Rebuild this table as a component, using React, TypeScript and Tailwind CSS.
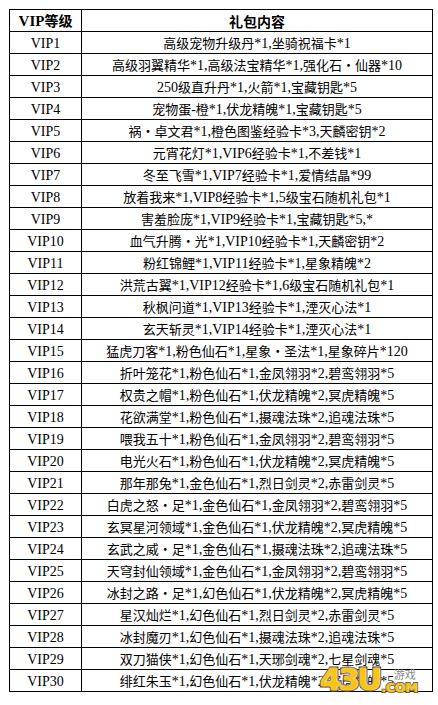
import React from "react";

const rows: string[] = [
  "高级宠物升级丹*1,坐骑祝福卡*1",
  "高级羽翼精华*1,高级法宝精华*1,强化石・仙器*10",
  "250级直升丹*1,火箭*1,宝藏钥匙*5",
  "宠物蛋-橙*1,伏龙精魄*1,宝藏钥匙*5",
  "祸・卓文君*1,橙色图鉴经验卡*3,天麟密钥*2",
  "元宵花灯*1,VIP6经验卡*1,不差钱*1",
  "冬至飞雪*1,VIP7经验卡*1,爱情结晶*99",
  "放着我来*1,VIP8经验卡*1,5级宝石随机礼包*1",
  "害羞脸庞*1,VIP9经验卡*1,宝藏钥匙*5,*",
  "血气升腾・光*1,VIP10经验卡*1,天麟密钥*2",
  "粉红锦鲤*1,VIP11经验卡*1,星象精魄*2",
  "洪荒古翼*1,VIP12经验卡*1,6级宝石随机礼包*1",
  "秋枫问道*1,VIP13经验卡*1,湮灭心法*1",
  "玄天斩灵*1,VIP14经验卡*1,湮灭心法*1",
  "猛虎刀客*1,粉色仙石*1,星象・圣法*1,星象碎片*120",
  "折叶笼花*1,粉色仙石*1,金凤翎羽*2,碧鸾翎羽*5",
  "权贵之帽*1,粉色仙石*1,伏龙精魄*2,冥虎精魄*5",
  "花欲满堂*1,粉色仙石*1,摄魂法珠*2,追魂法珠*5",
  "喂我五十*1,粉色仙石*1,金凤翎羽*2,碧鸾翎羽*5",
  "电光火石*1,粉色仙石*1,伏龙精魄*2,冥虎精魄*5",
  "那年那兔*1,金色仙石*1,烈日剑灵*2,赤雷剑灵*5",
  "白虎之怒・足*1,金色仙石*1,金凤翎羽*2,碧鸾翎羽*5",
  "玄冥星河领域*1,金色仙石*1,伏龙精魄*2,冥虎精魄*5",
  "玄武之威・足*1,金色仙石*1,摄魂法珠*2,追魂法珠*5",
  "天穹封仙领域*1,金色仙石*1,金凤翎羽*2,碧鸾翎羽*5",
  "冰封之路・足*1,幻色仙石*1,伏龙精魄*2,冥虎精魄*5",
  "星汉灿烂*1,幻色仙石*1,烈日剑灵*2,赤雷剑灵*5",
  "冰封魔刃*1,幻色仙石*1,摄魂法珠*2,追魂法珠*5",
  "双刀猫侠*1,幻色仙石*1,天琊剑魂*2,七星剑魂*5",
  "绯红朱玉*1,幻色仙石*1,伏龙精魄*2,冥虎精魄*5",
];

// latin runs get a serif face, CJK stays in Noto
function Mixed({ text, bold }: { text: string; bold?: boolean }) {
  const parts = text.split(/([\x00-\x7f]+)/).filter(Boolean);
  return (
    <span className="whitespace-nowrap">
      {parts.map((p, i) =>
        /^[\x00-\x7f]+$/.test(p) ? (
          <span
            key={i}
            className={`font-['Liberation_Serif',serif] ${
              bold ? "text-[15px] font-bold" : "text-[14px]"
            }`}
          >
            {p}
          </span>
        ) : (
          <span
            key={i}
            className={`font-['Noto_Sans_CJK_SC',sans-serif] ${
              bold ? "text-[14px] font-bold" : "text-[13px]"
            }`}
          >
            {p}
          </span>
        )
      )}
    </span>
  );
}

function Logo() {
  return (
    <div className="absolute left-[320px] top-[664px] flex items-end">
      <span className="font-['DejaVu_Sans',sans-serif] text-[31px] font-bold leading-none tracking-[-3px] text-[#f8c514] [-webkit-text-stroke:3px_#5a3a08] [paint-order:stroke_fill] [text-shadow:0_0_2px_#fff,0_0_2px_#fff]">
        43U
      </span>
      <div className="mb-[1px] ml-[2px] flex flex-col items-end">
        <span className="mr-[2px] font-['Noto_Sans_CJK_SC',sans-serif] text-[11px] leading-none text-[#8a8a8a]">
          游戏
        </span>
        <span className="mt-[1px] font-['DejaVu_Sans',sans-serif] text-[13px] font-bold leading-none tracking-[-0.5px] text-[#f8c514] [-webkit-text-stroke:2px_#5a3a08] [paint-order:stroke_fill] [text-shadow:0_0_2px_#fff]">
          .COM
        </span>
      </div>
    </div>
  );
}

export default function App() {
  return (
    <div className="relative h-[705px] w-[438px] overflow-hidden bg-white text-black">
      <div className="ml-[9px] mt-[9px] grid w-[424px] grid-cols-[72px_351px] border-l border-t border-black">
        <div className="flex h-[22px] items-center justify-center border-b border-r border-black leading-none">
          <Mixed text="VIP等级" bold />
        </div>
        <div className="flex h-[22px] items-center justify-center border-b border-r border-black leading-none">
          <Mixed text="礼包内容" bold />
        </div>
        {rows.map((r, i) => (
          <React.Fragment key={i}>
            <div className="flex h-[22px] items-center justify-center border-b border-r border-black leading-none">
              <Mixed text={`VIP${i + 1}`} />
            </div>
            <div className="flex h-[22px] items-center justify-center border-b border-r border-black leading-none">
              <Mixed text={r} />
            </div>
          </React.Fragment>
        ))}
      </div>
      <Logo />
    </div>
  );
}
